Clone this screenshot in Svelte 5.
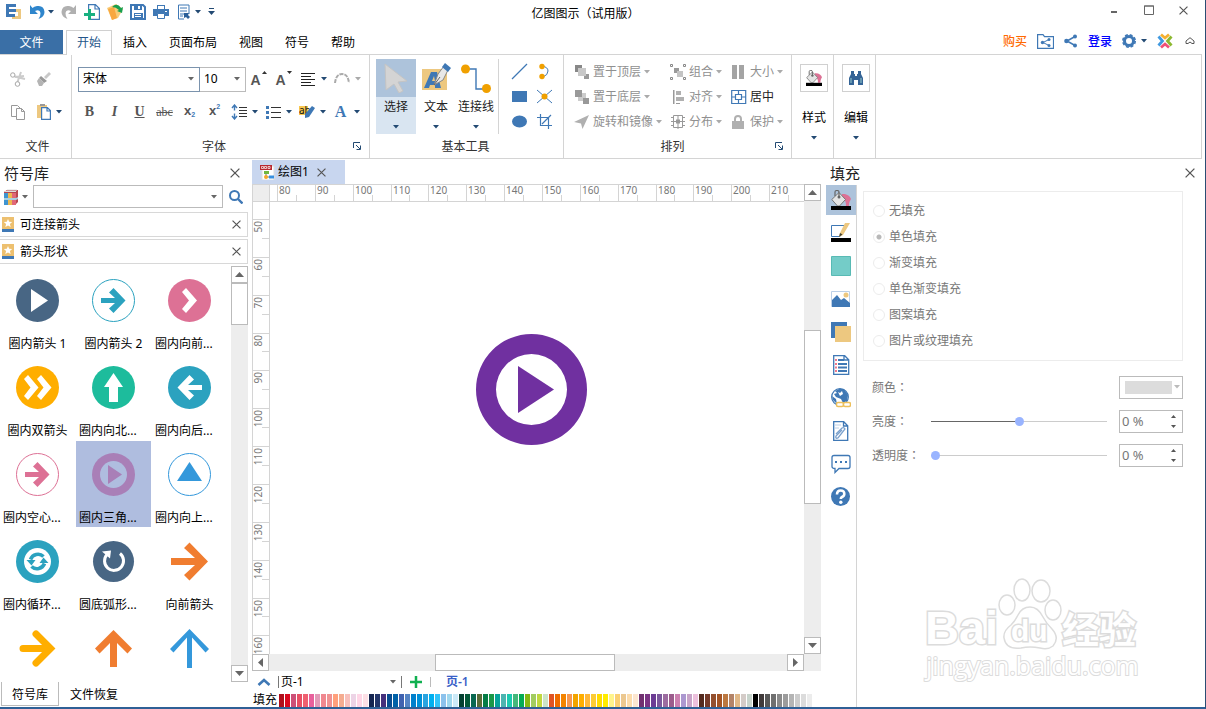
<script lang="ts">
	type Shape = { label: string; icon: string; color: string; cut?: boolean };

	const tabs = ["开始", "插入", "页面布局", "视图", "符号", "帮助"];

	const shapes: Shape[] = [
		{ label: "圈内箭头 1", icon: "play", color: "#486684" },
		{ label: "圈内箭头 2", icon: "ring-arrow", color: "#2ba2bf" },
		{ label: "圈内向前...", icon: "chevron", color: "#dd7195", cut: true },
		{ label: "圈内双箭头", icon: "double", color: "#ffae00" },
		{ label: "圈内向北...", icon: "north", color: "#1dbc9c", cut: true },
		{ label: "圈内向后...", icon: "back", color: "#2ba2bf", cut: true },
		{ label: "圈内空心...", icon: "ring-arrow", color: "#dd7195", cut: true },
		{ label: "圈内三角...", icon: "donut", color: "#a97fb7", cut: true },
		{ label: "圈内向上...", icon: "ring-up", color: "#3498db", cut: true },
		{ label: "圈内循环...", icon: "cycle", color: "#2ba2bf", cut: true },
		{ label: "圆底弧形...", icon: "redo", color: "#486684", cut: true },
		{ label: "向前箭头", icon: "right", color: "#f07d30" },
		{ label: "", icon: "round", color: "#ffae00" },
		{ label: "", icon: "up", color: "#f07d30" },
		{ label: "", icon: "thin-up", color: "#3498db" },
	];

	const arrange = [
		{ label: "置于顶层", icon: "front" },
		{ label: "组合", icon: "group" },
		{ label: "大小", icon: "size" },
		{ label: "置于底层", icon: "behind" },
		{ label: "对齐", icon: "align" },
		{ label: "居中", icon: "center", on: true },
		{ label: "旋转和镜像", icon: "rotate" },
		{ label: "分布", icon: "spread" },
		{ label: "保护", icon: "lock" },
	];

	const smallTools = [
		["line", "直线"], ["arc", "弧线"], ["rect", "矩形"],
		["cross", "连接点"], ["oval", "椭圆"], ["crop", "裁剪"],
	];

	const sideTools = [
		["bucket", "填充"], ["pen", "线条"], ["shadow", "阴影"], ["image", "图片"], ["layers", "图层"],
		["doc", "属性"], ["globe", "超链接"], ["clip", "附件"], ["chat", "注释"], ["help", "帮助"],
	];

	const fills = ["无填充", "单色填充", "渐变填充", "单色渐变填充", "图案填充", "图片或纹理填充"];

	const palette = (
		"b00f1b d9091f cd5078 e84f64 ef6070 e8609c e29ab8 f08890 f09292 ffa07c f5ac90 f8c0bc edd4e6 ffd6e6 fde0e6 " +
		"152550 24366a 45307c 084c90 0062a8 3f62b0 5584c4 0080cc 0090d8 2aa4e0 00b0f0 30c4fa 8cc2ec a0d8ee cceaf8 " +
		"044030 045838 0a6850 5a6c38 047c46 1a9848 06a49a 4cb4b0 1ccab0 44b87c 04ac54 84b814 a2cc60 c0d840 cce4c8 " +
		"e05424 ee6c00 f48400 f89850 f2a400 ffae00 ffb83a fccc34 ffdc00 ffec00 fff48c fad074 ecc890 fcdcac fce6d0 " +
		"703070 7a3484 6c3c94 7c589c 9c6ca0 9c5c8c cc80b0 ac98d0 c8a4c8 ecc0dc 542a1e 743a2a 94502e a45424 bc7840 " +
		"b48468 e0b888 d4ccc8 c8d4cc 000000 403a3a 585858 707070 8a8a8a 9c9c9c b4b4b4 cccccc dcdcdc ececec"
	).split(" ");

	// pixels per millimetre at the current zoom
	const scale = 3.785;

	function marks(first: number, count: number, offset: number) {
		return Array.from({ length: count }, (_, i) => ({
			value: first + i * 10,
			at: Math.round(offset + i * 10 * scale),
			half: Math.round(offset + (i * 10 + 5) * scale),
		}));
	}

	const across = marks(80, 14, 7);
	const down = marks(50, 12, 17);

	let activeTab = $state("开始");
	let activeShape = $state(7);
	let activeSide = $state("bucket");
	let fill = $state("单色填充");
	let sliders = $state([
		{ label: "亮度", value: 50 },
		{ label: "透明度", value: 0 },
	]);
</script>

{#snippet caret()}
	<svg class="caret" width="6" height="4" viewBox="0 0 6 4"><path d="M0 0h6L3 3.5z" fill="currentColor" /></svg>
{/snippet}

{#snippet cross(size)}
	<svg width={size} height={size} viewBox="0 0 10 10"><path d="M.6.6l8.800 8.800M9.400.6L.6 9.400" stroke="#555" stroke-width="1.300" /></svg>
{/snippet}

{#snippet bucket(size)}
	<svg width={size} height={size} viewBox="0 0 20 20">
		<path d="M11 4c5-.5 8 2 9 5-1 2-2 3-2 7h-3c0-3 0-6-4-8z" fill="#dd7195" />
		<path d="M.8 9.500L8 2.500l6.500 7-6 6.500h-2z" fill="#e4e4e4" stroke="#777" />
		<path d="M4 6V2q0-1.500 2-1.500T8 2v5" fill="none" stroke="#666" stroke-width="1.200" />
		<circle cx="8" cy="7" r="1.500" fill="#666" />
		<path d="M0 16h20v4H0z" />
	</svg>
{/snippet}

{#snippet scrollbar(vertical, before, size, after)}
	<div class="scrollbar" class:vertical>
		<button aria-label="后退">
			<svg width="9" height="9" viewBox="0 0 9 9"><path d={vertical ? "M0 7h9L4.500 2z" : "M7 0v9L2 4.500z"} fill="#666" /></svg>
		</button>
		<span style="flex: {before} 1 0"></span>
		<span class="thumb" style="flex: {size} 1 0"></span>
		<span style="flex: {after} 1 0"></span>
		<button aria-label="前进">
			<svg width="9" height="9" viewBox="0 0 9 9"><path d={vertical ? "M0 2h9L4.500 7z" : "M2 0v9l5-4.500z"} fill="#666" /></svg>
		</button>
	</div>
{/snippet}

{#snippet shapeArt(icon, color)}
	<svg width="43" height="43" viewBox="0 0 43 43" fill={color}>
		{#if icon.startsWith("ring")}
			<circle cx="21.500" cy="21.500" r="21" fill="#fff" stroke={color} />
		{:else if icon === "redo"}
			<circle cx="21.500" cy="21.500" r="20.500" />
		{:else if ["play", "chevron", "double", "north", "back", "cycle", "donut"].includes(icon)}
			<circle cx="21.500" cy="21.500" r="21.500" />
		{/if}

		{#if icon === "play"}
			<path d="M15 10v23l17-11.500z" fill="#fff" />
		{:else if icon === "ring-arrow"}
			<path d="M9 19h14l-6-5.500L21.500 9l12 12.500-12 12.500L17 29.500l6-5.500H9z" />
		{:else if icon === "chevron"}
			<path d="M14 13l4-4 11 12.500L18 34l-4-4 7-8.500z" fill="#fff" />
		{:else if icon === "double"}
			<path d="M8 13l4-4 10.500 12.500L12 34l-4-4 6.500-8.500zM21 13l4-4 10.500 12.500L25 34l-4-4 6.500-8.500z" fill="#fff" />
		{:else if icon === "north"}
			<path d="M21.500 7L31 21h-5v15h-9V21h-5z" fill="#fff" />
		{:else if icon === "back"}
			<path d="M34 19H20l6-5.500L21.500 9 9.500 21.500l12 12.500 4.500-4.500-6-5.500h14z" fill="#fff" />
		{:else if icon === "donut"}
			<circle cx="21.500" cy="21.500" r="13.500" fill="#afbddf" />
			<path d="M16 12v19l14-9.500z" />
		{:else if icon === "ring-up"}
			<path d="M21.500 9L34 28H9z" />
		{:else if icon === "cycle"}
			<circle cx="21.500" cy="21.500" r="13.500" fill="#fff" />
			<path d="M14.500 19.500a8 8 0 0 1 13-3M28.500 23.500a8 8 0 0 1-13 3" fill="none" stroke={color} stroke-width="3.600" />
			<path d="M10.500 20h9l-4 5.500zM32.500 23h-9l4-5.500z" />
		{:else if icon === "redo"}
			<path d="M28 13.500a9.500 9.500 0 1 1-13 1" fill="none" stroke="#fff" stroke-width="3" />
			<path d="M10 11.500l9-1-1 8z" fill="#fff" />
		{:else if icon === "right"}
			<path d="M3 18h24L16 8l5.500-5.500 18.500 19-18.500 19L16 35l11-10H3z" />
		{:else if icon === "round"}
			<path d="M7 21.500h27M20 7l14.500 14.500L20 36" fill="none" stroke={color} stroke-width="7" stroke-linecap="round" />
		{:else if icon === "up"}
			<path d="M18 40V16L7.500 26.500l-4.500-5L21.500 3 40 21.500l-4.500 5L25 16v24z" />
		{:else if icon === "thin-up"}
			<path d="M19 41V10.500L5.500 25.500 2 22 21.500 2 41 22l-3.500 3.500L24 10.500V41z" />
		{/if}
	</svg>
{/snippet}

{#snippet arrangeIcon(name)}
	<svg width="16" height="16" viewBox="0 0 16 16" fill="#b0b0b0">
		{#if name === "front"}
			<path d="M1 1h7v7H1z" fill="#888" /><path d="M10 10h5v5h-5zM8 6h-4v4h2V5h6z" fill="#999" /><path d="M4 4h8v8H4z" fill="#c8c8c8" />
		{:else if name === "behind"}
			<path d="M4 4h8v8H4z" fill="#ccc" /><path d="M1 1h7v7H1zM9 9h6v6H9z" fill="#999" />
		{:else if name === "rotate"}
			<path d="M0 8L15 1 8.500 15 7 9.500z" />
		{:else if name === "group"}
			<path d="M4 4h5v5H4z" fill="#999" /><path d="M7 7h6v6H7z" fill="#c4c4c4" />
			<path d="M.5.5h2v2h-2zM13.500.5h2v2h-2zM.5 13.500h2v2h-2zM13.500 13.500h2v2h-2z" fill="none" stroke="#888" />
		{:else if name === "align"}
			<path d="M3 1h1.500v14H3z" fill="#999" /><path d="M6 2h5v4H6zM6 8h8v4H6z" /><path d="M6 14h4v1H6z" fill="#999" />
		{:else if name === "spread"}
			<path d="M3.500 1.500h9v12h-9zM8 1v14M1 7.500h14M1 3.500h3M1 11.500h3M12 3.500h3M12 11.500h3" fill="none" stroke="#999" /><path d="M6 5.500h4v4H6z" fill="#999" />
		{:else if name === "size"}
			<path d="M1 1h5v14H1zM8 1h5v14H8z" fill="#a4a4a4" />
		{:else if name === "center"}
			<path d="M.7 1.500h14v13H.7zM4.500 5.500h6v5h-6zM7.500 1.500v4M7.500 10.500v4M.7 8h4M10.500 8h4" fill="none" stroke="#3f78b5" stroke-width="1.200" />
		{:else if name === "lock"}
			<path d="M1 7h12v8H1z" /><path d="M4 7V5q0-3 3-3t3 3v2" fill="none" stroke="#b0b0b0" stroke-width="2" />
		{/if}
	</svg>
{/snippet}

{#snippet toolIcon(name)}
	<svg width="17" height="17" viewBox="0 0 17 17" fill="#3f78b5">
		{#if name === "line"}
			<path d="M1 16L16 1" stroke="#3f78b5" stroke-width="1.200" />
		{:else if name === "rect"}
			<path d="M1 3h15v11H1z" />
		{:else if name === "oval"}
			<ellipse cx="8.500" cy="8.500" rx="7.500" ry="6" />
		{:else if name === "arc"}
			<path d="M6 3q6 1 6 5t-5 6" fill="none" stroke="#3f78b5" /><circle cx="6" cy="3.500" r="2.700" fill="#f0a000" /><circle cx="6" cy="13.500" r="2.700" fill="#f0a000" />
		{:else if name === "cross"}
			<path d="M1 2l15 13M16 2L1 15" stroke="#3f78b5" /><circle cx="8.500" cy="8.500" r="3" fill="#f0a000" />
		{:else if name === "crop"}
			<path d="M4.500 1v11.500H16M1 4.500h11.500V16M15 2l-9 9" fill="none" stroke="#3f78b5" stroke-width="1.200" />
		{/if}
	</svg>
{/snippet}

{#snippet sideIcon(name)}
	{#if name === "bucket"}
		{@render bucket(20)}
	{:else}
		<svg width="20" height="20" viewBox="0 0 20 20">
			{#if name === "pen"}
				<path d="M.5 2.500h14L9 13.500H.5z" fill="#fff" stroke="#3f78b5" /><path d="M0 15h20v4H0z" />
				<path d="M14 0h5l-7 12-4 2 1-4z" fill="#edc880" /><path d="M9 10l2.500 1.500L8 14z" fill="#443" />
			{:else if name === "shadow"}
				<path d="M.5.5h19v19H.5z" fill="#74ccc8" stroke="#58bab4" />
			{:else if name === "image"}
				<path d="M.5 2.500h18v15H.5z" fill="#fff" stroke="#bcd0e8" /><circle cx="15" cy="6" r="2.500" fill="#edc880" />
				<path d="M1 11l5-5 4 5 3-2 6 5v4H1z" fill="#3f78b5" />
			{:else if name === "layers"}
				<path d="M0 0h16v16H0z" fill="#3f78b5" /><path d="M4 4h16v16H4z" fill="#edc880" />
			{:else if name === "doc"}
				<path d="M2.700.7h11l4 4v14.600h-15zM13 1v4h4" fill="#fff" stroke="#3f78b5" stroke-width="1.300" />
				<path d="M7 5h6M7 9h9M7 12.500h9M7 16h9" stroke="#3f78b5" stroke-width="2" /><path d="M4 5h2M4 9h2M4 12.500h2M4 16h2" stroke="#f0788c" stroke-width="2" />
			{:else if name === "globe"}
				<circle cx="9" cy="9" r="8.300" fill="#fff" stroke="#3f78b5" stroke-width="1.300" />
				<path d="M4 3l4-2h5l4 6-1 6-4 2-2-4-5-2-2-3 3-1zM1 8l4 3 1 5-4-4z" fill="#3f78b5" /><path d="M7 4l2 1 2-2 1 3-3 2z" fill="#fff" />
				<rect x="5.500" y="14.500" width="7" height="4" rx="1.500" fill="#fff" stroke="#edc05c" stroke-width="1.500" /><rect x="12.500" y="14.500" width="7" height="4" rx="1.500" fill="#fff" stroke="#edc05c" stroke-width="1.500" />
			{:else if name === "clip"}
				<path d="M2.700.7h10l4 4v14.600h-14zM12.500 1v4h4" fill="#fff" stroke="#3f78b5" stroke-width="1.300" /><path d="M4 4h6M4 7h4" stroke="#bcd0e8" />
				<path d="M5 13l6-6q2-1 3 1l-7 9q-3 1-2-2l6-6" fill="none" stroke="#7aa0cc" stroke-width="1.300" />
			{:else if name === "chat"}
				<path d="M3 1.500h14q2 0 2 2v9q0 2-2 2H8l-4 4v-4q-3 0-3-2v-9q0-2 2-2z" fill="#fff" stroke="#3f78b5" stroke-width="1.300" />
				<path d="M4 7h2v2H4zM9 7h2v2H9zM14 7h2v2h-2z" fill="#3f78b5" />
			{:else if name === "help"}
				<circle cx="9.500" cy="9.500" r="9.500" fill="#3f78b5" /><path d="M6 7.500q0-4 3.700-4t3.600 3.500q0 2-2.300 3-1.200.6-1.200 2" fill="none" stroke="#fff" stroke-width="2.600" /><circle cx="9.800" cy="15.300" r="1.700" fill="#fff" />
			{/if}
		</svg>
	{/if}
{/snippet}

<div class="window">
	<header class="titlebar">
		<div class="quick">
			<svg width="16" height="16" viewBox="0 0 16 16">
				<path d="M9 5h6v10H6v-3h6V8H9z" fill="#edc880" /><path d="M0 0h10v3H3v2h7v3H3v2h6v3H0z" fill="#3f78b5" />
			</svg>
			<button class="drop" aria-label="撤销">
				<svg width="16" height="16" viewBox="0 0 16 16"><path d="M1 1v9h8L6 7q5-2 5.500 2 .2 3-2 6 6-2 6-7Q15 1 8 2 5 2.500 3.500 4z" fill="#2f86cc" /></svg>
				{@render caret()}
			</button>
			<button aria-label="重做">
				<svg width="16" height="16" viewBox="0 0 16 16"><path d="M15 1v9H7l3-3Q5 5 4.500 9q-.2 3 2 6-6-2-6-7Q1 1 8 2q3 .5 4.500 2z" fill="#b0b0b0" /></svg>
			</button>
			<button aria-label="新建">
				<svg width="16" height="16" viewBox="0 0 16 16"><path d="M4.600.6h6.800l4 4v10.800H4.600zM11 1v4h4" fill="#fff" stroke="#3f78b5" stroke-width="1.200" /><path d="M4 5h3v4h4v3H7v4H4v-4H0V9h4z" fill="#18b080" /></svg>
			</button>
			<button aria-label="打开">
				<svg width="16" height="16" viewBox="0 0 16 16"><path d="M0 4l9-4 7 5-5 9-6 2z" fill="#f8cc78" /><path d="M1 5l6-2 3 11-5 2z" fill="#f8a840" /><path d="M5 3q5-5 9 1l2-1-1 6-5-2 2-1Q9 3 5 3z" fill="#18a050" /></svg>
			</button>
			<button aria-label="保存">
				<svg width="16" height="16" viewBox="0 0 16 16"><path d="M1 1h12l2 2v12H1z" fill="#fff" stroke="#3f78b5" stroke-width="2" /><path d="M4 1h8v5H4zM4 9h9v6H4z" fill="#3f78b5" /><path d="M8 2h2v3H8zM5 10h6v1H5zM5 12h6v1H5z" fill="#fff" /></svg>
			</button>
			<button aria-label="打印">
				<svg width="16" height="16" viewBox="0 0 16 16" fill="#3f78b5"><path d="M4 1h8v4h4v7H0V5h4z" /><path d="M5 2h6v3H5zM4 10h8v4H4zM12 7h2v1h-2z" fill="#fff" /><path d="M4.500 9.500h7v5h-7z" fill="#fff" stroke="#3f78b5" /></svg>
			</button>
			<button class="drop" aria-label="预览">
				<svg width="16" height="16" viewBox="0 0 16 16"><path d="M2.500 1h10.500v9M2.500 1v14H8" fill="none" stroke="#3f78b5" /><path d="M4 4h7M4 7h7M4 10h4M4 12h3" stroke="#3f78b5" /><path d="M8 9h5l-1 2 2 2-2 2-2-2-2 1z" fill="#2b5f98" /></svg>
				{@render caret()}
			</button>
			<button aria-label="自定义">
				<svg width="7" height="8" viewBox="0 0 7 8" fill="#234a73"><path d="M1 0h5v1H1zM0 3h7L3.500 7z" /></svg>
			</button>
		</div>
		<h1>亿图图示（试用版）</h1>
		<div class="controls">
			<button aria-label="最小化"><svg width="10" height="10" viewBox="0 0 10 10"><path d="M2 6h6v2H2z" fill="#666" /></svg></button>
			<button aria-label="最大化"><svg width="10" height="10" viewBox="0 0 10 10"><path d="M.5 1h9v8.500h-9zM0 1h10" fill="none" stroke="#666" /></svg></button>
			<button aria-label="关闭">{@render cross(9)}</button>
		</div>
	</header>

	<nav class="tabbar">
		<button class="file">文件</button>
		{#each tabs as tab}
			<button class="tab" class:active={tab === activeTab} onclick={() => (activeTab = tab)}>{tab}</button>
		{/each}
		<div class="account">
			<a class="buy" href="#buy">购买</a>
			<button aria-label="共享文件夹">
				<svg width="17" height="15" viewBox="0 0 17 15"><path d="M.6 14.400V.6h5.400l1.500 2h9v11.800z" fill="none" stroke="#3f78b5" stroke-width="1.200" /><path d="M12 5.500L6 8.500l6 3" fill="none" stroke="#3f78b5" /><circle cx="12" cy="5.500" r="1.500" fill="#3f78b5" /><circle cx="5.500" cy="8.500" r="1.700" fill="#3f78b5" /><circle cx="12" cy="11.500" r="1.500" fill="#3f78b5" /></svg>
			</button>
			<button aria-label="分享">
				<svg width="14" height="14" viewBox="0 0 14 14" fill="#3f78b5"><path d="M11 2.500L3 7l8 4.500" fill="none" stroke="#3f78b5" stroke-width="1.500" /><circle cx="11" cy="2.500" r="2" /><circle cx="2.500" cy="7" r="2.300" /><circle cx="11" cy="11.500" r="2" /></svg>
			</button>
			<a class="login" href="#login">登录</a>
			<button class="drop" aria-label="设置">
				<svg width="14" height="14" viewBox="0 0 14 14"><circle cx="7" cy="7" r="4.500" fill="none" stroke="#3f78b5" stroke-width="3" /><circle cx="7" cy="7" r="6.200" fill="none" stroke="#3f78b5" stroke-width="1.600" stroke-dasharray="2.900 1.970" /></svg>
				{@render caret()}
			</button>
			<button aria-label="社区">
				<svg width="16" height="16" viewBox="0 0 16 16" stroke-width="2.800" fill="none"><path d="M4 1.500l4 3.500 4-3.500" stroke="#f5b030" /><path d="M1.500 3.500L5.500 8l-4 4.500" stroke="#4099e0" /><path d="M14.500 3.500L10.500 8l4 4.500" stroke="#8cb830" /><path d="M4 14.500L8 11l4 3.500" stroke="#f05078" /></svg>
			</button>
			<button aria-label="收起功能区">
				<svg width="10" height="8" viewBox="0 0 10 8"><path d="M1 4l4-3.300L9 4v2.500H7L5 5 3 6.500H1z" fill="#fff" stroke="#555" /></svg>
			</button>
		</div>
	</nav>

	<section class="ribbon">
		<div class="group files">
			<div class="line">
				<button aria-label="剪切">
					<svg width="16" height="16" viewBox="0 0 16 16" fill="none" stroke="#a8a8a8"><path d="M4.500 5.500L15 8M7.500 11L11 1M5 6l9-1" stroke="#ccc" stroke-width="2" /><circle cx="2.800" cy="4" r="2.200" /><circle cx="7.500" cy="13" r="2.300" /></svg>
				</button>
				<button aria-label="格式刷">
					<svg width="16" height="16" viewBox="0 0 16 16"><path d="M8 6l5-5 2 2-5 5z" fill="#c8c8c8" /><path d="M5 5l6 5-3 2-5-5z" fill="#999" /><path d="M3 7l5 5-2 3H3l-2-5z" fill="#b4b4b4" /></svg>
				</button>
			</div>
			<div class="line">
				<button aria-label="复制">
					<svg width="16" height="16" viewBox="0 0 16 16" fill="#fff" stroke="#999"><path d="M1.500 1.500h6l3 3v8h-9z" /><path d="M6.500 4.500h5l3 3v8h-8zM11.500 4.500v3h3" /></svg>
				</button>
				<button class="drop" aria-label="粘贴">
					<svg width="16" height="16" viewBox="0 0 16 16"><path d="M1 1h10v13H1z" fill="#edc880" /><path d="M4 0h5v2H4z" fill="#999" /><path d="M5.600 3.600h5.800l3 3v8.800H5.600zM11 4v3h3" fill="#fff" stroke="#3f78b5" stroke-width="1.200" /></svg>
					{@render caret()}
				</button>
			</div>
			<h2>文件</h2>
		</div>

		<div class="group fonts">
			<div class="line">
				<label class="combo family">
					<select aria-label="字体"><option>宋体</option></select>{@render caret()}
				</label>
				<label class="combo size">
					<select aria-label="字号"><option>10</option></select>{@render caret()}
				</label>
				<button class="letter" aria-label="增大字号">A<svg width="5" height="3" viewBox="0 0 5 3"><path d="M0 3h5L2.500 0z" fill="#333" /></svg></button>
				<button class="letter" aria-label="减小字号">A<svg width="5" height="3" viewBox="0 0 5 3"><path d="M0 0h5L2.500 3z" fill="#333" /></svg></button>
				<button class="drop wide" aria-label="对齐方式">
					<svg width="16" height="16" viewBox="0 0 16 16"><path d="M1 2.500h14M1 5.500h10M1 8.500h14M1 11.500h10M1 14.500h14" stroke="#222" /></svg>
					{@render caret()}
				</button>
				<button class="drop wide faded" aria-label="弧形文字">
					<svg width="16" height="16" viewBox="0 0 16 16"><path d="M1 12Q2 3 8 3t7 9" fill="none" stroke="#aaa" stroke-width="2" stroke-dasharray="4 1" /></svg>
					{@render caret()}
				</button>
			</div>
			<div class="line formats">
				<button class="serif bold">B</button>
				<button class="serif italic">I</button>
				<button class="serif under">U</button>
				<button class="serif strike">abc</button>
				<button class="script">x<sub>2</sub></button>
				<button class="script">x<sup>2</sup></button>
				<button class="drop wide" aria-label="行距">
					<svg width="16" height="16" viewBox="0 0 16 16"><path d="M3.500 1.500v5M3.500 9.500v5M1 4l2.500-3L6 4M1 12l2.500 3L6 12" fill="none" stroke="#3f78b5" stroke-width="1.400" /><path d="M8 3.500h8M8 6.500h8M8 9.500h8M8 12.500h8" stroke="#333" /></svg>
					{@render caret()}
				</button>
				<button class="drop wide" aria-label="项目符号">
					<svg width="16" height="16" viewBox="0 0 16 16"><path d="M1 2h3v3H1zM1 7h3v3H1zM1 12h3v3H1z" fill="#3f78b5" /><path d="M6 3.500h10M6 8.500h10M6 13.500h10" stroke="#333" /></svg>
					{@render caret()}
				</button>
				<button class="drop wide" aria-label="突出显示">
					<svg width="16" height="16" viewBox="0 0 16 16"><path d="M0 2h9v9H0z" fill="#f8c850" /><text x="0" y="10" font-size="10" fill="#111">ab</text><path d="M13 2l3 2-6 9-4 1V10z" fill="#3f78b5" /></svg>
					{@render caret()}
				</button>
				<button class="drop wide color" aria-label="字体颜色"><b>A</b>{@render caret()}</button>
			</div>
			<h2>字体</h2>
			<button class="launcher" aria-label="字体设置"><svg width="8" height="8" viewBox="0 0 8 8"><path d="M.5 6V.5H7M3 3l4 4M7.500 3.500v4h-4" fill="none" stroke="#234a73" /></svg></button>
		</div>

		<div class="group basic">
			<div class="tools">
				<button class="big chosen">
					<span class="art"><svg width="24" height="30" viewBox="0 0 24 30"><path d="M1 1l22 17-9 1 5 9-4 2-5-9-8 6z" fill="#d4d4d4" stroke="#c4c4c4" /></svg></span>
					选择{@render caret()}
				</button>
				<button class="big">
					<span class="art"><svg width="30" height="30" viewBox="0 0 30 30"><path d="M1 6h25v21H1z" fill="#edc880" /><path d="M10 9h6l4 16h-6v-3H9l-1 3H3zM13 13l-2 5h3z" fill="#3f78b5" /><path d="M23 3l4 4-5 10-9 5 4-11z" fill="#e8e8e8" stroke="#888" /><path d="M24 0l6 5-3 4-6-5z" fill="#3f78b5" /><path d="M13 22l6-8" stroke="#666" /></svg></span>
					文本{@render caret()}
				</button>
				<button class="big">
					<span class="art"><svg width="30" height="30" viewBox="0 0 30 30"><path d="M5 6h10v20h12" fill="none" stroke="#3f78b5" stroke-width="1.400" /><circle cx="4.500" cy="6" r="4.500" fill="#f0a000" /><circle cx="25.500" cy="25.500" r="4.500" fill="#f0a000" /></svg></span>
					连接线{@render caret()}
				</button>
				<div class="small">
					{#each smallTools as [icon, name]}
						<button aria-label={name}>{@render toolIcon(icon)}</button>
					{/each}
				</div>
			</div>
			<h2>基本工具</h2>
		</div>

		<div class="group arrange">
			<div class="commands">
				{#each arrange as item}
					<button class:on={item.on}>
						{@render arrangeIcon(item.icon)}{item.label}
						{#if !item.on}{@render caret()}{/if}
					</button>
				{/each}
			</div>
			<h2>排列</h2>
			<button class="launcher" aria-label="排列设置"><svg width="8" height="8" viewBox="0 0 8 8"><path d="M.5 6V.5H7M3 3l4 4M7.500 3.500v4h-4" fill="none" stroke="#234a73" /></svg></button>
		</div>

		<button class="group folded"><span class="frame">{@render bucket(16)}</span>样式{@render caret()}</button>
		<button class="group folded">
			<span class="frame"><svg width="16" height="16" viewBox="0 0 16 16" fill="#356496"><path d="M3 1h3v3h1v2h2V4h1V1h3v3l2 4v7h-5v-5H6v5H1V8l2-4z" /><path d="M3 8v5M13 8v5" stroke="#9cc" /></svg></span>
			编辑{@render caret()}
		</button>
	</section>

	<main>
		<aside class="library">
			<div class="heading"><h3>符号库</h3><button aria-label="关闭符号库">{@render cross(10)}</button></div>
			<div class="search">
				<button class="drop" aria-label="符号库">
					<svg width="15" height="16" viewBox="0 0 15 16"><path d="M0 3l3-2h11v12l-2 2H0z" fill="#b84850" /><path d="M0 4h4v12H0z" fill="#3f94d0" /><path d="M4 4h4v12H4z" fill="#edb850" /><path d="M8 4h4v12H8z" fill="#e06878" /><path d="M1 2.500h11M3 1h10" stroke="#ddd" /><path d="M0 9h12l2-1v2l-2 1H0z" fill="#a8d0e0" /></svg>
					{@render caret()}
				</button>
				<label class="combo"><input type="text" aria-label="搜索符号" />{@render caret()}</label>
				<button aria-label="搜索"><svg width="14" height="14" viewBox="0 0 14 14" fill="none" stroke="#3f78b5"><circle cx="5.500" cy="5.500" r="4.500" stroke-width="2" /><path d="M9 9l4.500 4.500" stroke-width="2.400" /></svg></button>
			</div>
			{#each ["可连接箭头", "箭头形状"] as name}
				<div class="category">
					<svg width="12" height="15" viewBox="0 0 12 15"><path d="M0 0h12v12H0z" fill="#edc070" /><path d="M0 12h12v3H0z" fill="#3f78b5" /><path d="M6 2l1.200 2.800 3 .2-2.300 2 .8 3L6 8.400 3.300 10l.8-3-2.300-2 3-.2z" fill="#fff" /></svg>
					<span>{name}</span>
					<button aria-label="关闭{name}">{@render cross(9)}</button>
				</div>
			{/each}
			<div class="browser">
				<div class="shapes">
					{#each shapes as shape, i}
						<button class="shape" class:active={i === activeShape} onclick={() => (activeShape = i)}>
							{@render shapeArt(shape.icon, shape.color)}
							{#if shape.label}<span class:cut={shape.cut}>{shape.label}</span>{/if}
						</button>
					{/each}
				</div>
				{@render scrollbar(true, 0, 40, 342)}
			</div>
			<div class="panel-tabs">
				<button class="active">符号库</button>
				<button>文件恢复</button>
			</div>
		</aside>

		<section class="workspace">
			<div class="documents">
				<div class="document">
					<svg width="15" height="15" viewBox="0 0 15 15"><path d="M2 1h12v14H2z" fill="#fff" stroke="#ddd" /><path d="M0 0h12v5H0z" fill="#b82830" /><path d="M1.500 1.500h2v2h-2zM4.500 1.500h2v2h-2zM8 1.500h2v2H8z" fill="none" stroke="#fff" stroke-width=".7" /><path d="M4 6h5v3H4z" fill="#70b840" /><path d="M6 9v3h4" fill="none" stroke="#777" /><circle cx="6" cy="12" r="2" fill="#f5a828" /><path d="M9 10.500h5v3H9z" fill="#3890e0" /></svg>
					绘图1
					<button aria-label="关闭绘图1">{@render cross(9)}</button>
				</div>
			</div>
			<div class="board">
				<div class="corner"></div>
				<svg class="ruler top">
					{#each across as mark}
						<path d="M{mark.at + 0.5} 0v17M{mark.half + 0.5} 10v7" />
						<text x={mark.at + 2} y="9">{mark.value}</text>
					{/each}
				</svg>
				<div class="bar-y">{@render scrollbar(true, 130, 172, 134)}</div>
				<svg class="ruler left">
					{#each down as mark}
						<path d="M0 {mark.at + 0.5}h17M9 {mark.half + 0.5}h8" />
						<text text-anchor="end" transform="translate(9 {mark.at + 2}) rotate(-90)">{mark.value}</text>
					{/each}
				</svg>
				<div class="canvas">
					<svg class="figure" width="111" height="111" viewBox="0 0 111 111" fill="#7030a0">
						<path d="M55.500 0a55.500 55.500 0 1 1 0 111 55.500 55.500 0 1 1 0-111zm0 20a35.500 35.500 0 1 0 0 71 35.500 35.500 0 1 0 0-71z" /><path d="M42 32v47l36-23.500z" />
					</svg>
				</div>
				<div class="bar-x">{@render scrollbar(false, 166, 179, 172)}</div>
				<div class="rest"></div>
			</div>
			<div class="pages">
				<button aria-label="展开"><svg width="14" height="8" viewBox="0 0 14 8"><path d="M1.500 7L7 2l5.500 5" fill="none" stroke="#3f78b5" stroke-width="2.600" /></svg></button>
				<label class="combo"><select aria-label="页面"><option>页-1</option></select>{@render caret()}</label>
				<button aria-label="添加页面"><svg width="12" height="12" viewBox="0 0 12 12"><path d="M6 0v12M0 6h12" stroke="#10b050" stroke-width="2.500" /></svg></button>
				<i></i>
				<button class="page">页-1</button>
			</div>
			<div class="palette">
				<span>填充</span>
				{#each palette as color}
					<button aria-label="#{color}" style="background: #{color}"></button>
				{/each}
			</div>
		</section>

		<aside class="format">
			<div class="heading"><h3>填充</h3><button aria-label="关闭填充">{@render cross(10)}</button></div>
			<div class="content">
				<div class="side">
					{#each sideTools as [icon, name]}
						<button class:active={icon === activeSide} aria-label={name} onclick={() => (activeSide = icon)}>{@render sideIcon(icon)}</button>
					{/each}
				</div>
				<div class="settings">
					<fieldset disabled>
						{#each fills as name}
							<label><input type="radio" name="fill" value={name} bind:group={fill} />{name}</label>
						{/each}
					</fieldset>
					<div class="setting">
						<span>颜色<span class="colon">：</span></span>
						<button class="field swatch" disabled aria-label="颜色"><i></i>{@render caret()}</button>
					</div>
					{#each sliders as slider}
						<div class="setting">
							<span>{slider.label}<span class="colon">：</span></span>
							<input type="range" disabled aria-label={slider.label} bind:value={slider.value} style="--value: {slider.value}%" />
							<div class="field">
								<input type="text" disabled aria-label={slider.label} value="0 %" />
								<div class="steps">
									<button disabled aria-label="增加"><svg width="5" height="3" viewBox="0 0 5 3"><path d="M0 3h5L2.500 0z" fill="#555" /></svg></button>
									<button disabled aria-label="减少"><svg width="5" height="3" viewBox="0 0 5 3"><path d="M0 0h5L2.500 3z" fill="#555" /></svg></button>
								</div>
							</div>
						</div>
					{/each}
				</div>
			</div>
			<svg class="mark" width="220" height="110" viewBox="0 0 220 110" fill="#fff" stroke="#dcdcdc" stroke-width="1.500">
				<text x="2" y="67" font-size="47" font-weight="bold">Bai</text>
				<ellipse cx="84" cy="28" rx="8" ry="10" /><ellipse cx="99" cy="13" rx="8" ry="11" /><ellipse cx="118" cy="14" rx="9" ry="11" /><ellipse cx="130" cy="33" rx="8" ry="10" />
				<path d="M107 30q8 0 13 10 3 6 9 12 8 9 1 17-5 4-13 2-10-2-19 0-15 2-17-10-1-7 7-13 4-4 7-10 4-8 12-8z" />
				<text x="88" y="64" font-size="30" font-weight="bold">du</text>
				<text class="cjk" x="139" y="67" font-size="37" font-weight="bold">经验</text>
				<text class="address" x="3" y="98" font-size="25">jingyan.baidu.com</text>
			</svg>
		</aside>
	</main>
</div>

<style>
	:global(body) {
		margin: 0;
	}

	.window {
		box-sizing: border-box;
		height: 100vh;
		display: flex;
		flex-direction: column;
		overflow: hidden;
		border-right: 1px solid #2b4d73;
		border-bottom: 2px solid #2f6096;
		background: #fff;
		color: #000;
		font: 12px/16px "Noto Sans", "Noto Sans CJK SC", sans-serif;
	}

	.window * {
		box-sizing: border-box;
	}

	button,
	select,
	input {
		margin: 0;
		padding: 0;
		border: 0;
		border-radius: 0;
		background: none;
		color: inherit;
		font: inherit;
		outline: none;
	}

	button {
		display: flex;
		align-items: center;
		justify-content: center;
		white-space: nowrap;
	}

	svg {
		display: block;
		flex-shrink: 0;
	}

	h1,
	h2,
	h3 {
		margin: 0;
		font-size: 12px;
		font-weight: 400;
	}

	.caret {
		color: #234a73;
	}

	.drop {
		gap: 3px;
	}

	/* title bar */

	.titlebar {
		display: grid;
		grid-template-columns: 1fr auto 1fr;
		align-items: center;
		height: 28px;
		flex-shrink: 0;
	}

	.quick {
		display: flex;
		align-items: center;
		gap: 7px;
		height: 24px;
		padding-left: 6px;
		align-self: start;
	}

	.titlebar h1 {
		padding-right: 34px;
	}

	.controls {
		display: flex;
		justify-content: flex-end;
		height: 20px;
		padding-right: 4px;
		align-self: start;
	}

	.controls button {
		width: 35px;
	}

	/* tabs */

	.tabbar {
		display: flex;
		align-items: flex-end;
		height: 26px;
		flex-shrink: 0;
	}

	.file {
		width: 63px;
		height: 24px;
		margin-right: 3px;
		padding-top: 2px;
		background: #3a6fa6;
		color: #fff;
	}

	.tab {
		height: 24px;
		padding: 2px 11px 0;
	}

	.tab.active {
		height: 25px;
		margin-bottom: -1px;
		padding: 0 10px;
		z-index: 1;
		background: #fff;
		border: 1px solid #d0d0d0;
		border-bottom: 0;
		color: #24568a;
	}

	.account {
		display: flex;
		align-items: center;
		gap: 10px;
		height: 26px;
		margin-left: auto;
		padding-right: 10px;
	}

	.account a {
		padding-top: 2px;
		font-weight: 500;
		text-decoration: none;
	}

	.account .drop {
		gap: 5px;
	}

	.account button:last-child {
		margin-left: 2px;
	}

	.buy {
		color: #ff6a00;
	}

	.login {
		color: #00f;
	}

	/* ribbon */

	.ribbon {
		display: flex;
		height: 105px;
		flex-shrink: 0;
		margin-right: 3px;
		border: 1px solid #d4d4d4;
		border-left: 0;
	}

	.group {
		position: relative;
		display: flex;
		flex-direction: column;
		border-right: 1px solid #d4d4d4;
		padding-bottom: 3px;
	}

	.group h2 {
		margin-top: auto;
		text-align: center;
		color: #333;
	}

	.line {
		display: flex;
		align-items: center;
		height: 24px;
	}

	.files {
		width: 72px;
		gap: 9px;
		padding-top: 12px;
	}

	.files h2 {
		padding-left: 4px;
	}

	.files .line {
		gap: 10px;
		padding-left: 10px;
	}

	.files .drop {
		gap: 4px;
	}

	.fonts {
		width: 298px;
		gap: 9px;
		padding-top: 12px;
		padding-left: 5px;
	}

	.fonts h2 {
		padding-right: 18px;
	}

	.fonts .line:first-child {
		padding-left: 1px;
	}

	.combo {
		position: relative;
		display: flex;
		align-items: center;
		border: 1px solid #bbb;
	}

	.combo select,
	.combo input {
		appearance: none;
		width: 100%;
		height: 100%;
		padding-left: 4px;
	}

	.combo .caret {
		position: absolute;
		right: 5px;
		color: #666;
		pointer-events: none;
	}

	.family {
		width: 122px;
		height: 25px;
		border-color: #7b93ad;
	}

	.size {
		width: 46px;
		height: 25px;
		border-left: 0;
	}

	.letter {
		width: 25px;
		height: 24px;
		gap: 1px;
		align-items: flex-start;
		padding-top: 4px;
		color: #555;
		font: bold 14px/18px "Liberation Sans", sans-serif;
	}

	.wide {
		width: 34px;
		height: 24px;
		gap: 5px;
	}

	.faded .caret {
		color: #aaa;
	}

	.formats button:not(.wide) {
		width: 25px;
		height: 24px;
		color: #555;
	}

	.formats .serif {
		font: bold 14px/16px "Liberation Serif", serif;
	}

	.formats .italic {
		font-style: italic;
	}

	.under {
		text-decoration: underline;
	}

	.formats .strike {
		font-size: 12px;
		font-weight: 400;
		text-decoration: line-through;
	}

	.formats .script {
		padding-bottom: 2px;
		font: bold 13px/16px "Liberation Sans", sans-serif;
	}

	.script sub,
	.script sup {
		height: 16px;
		color: #3f78b5;
		font-size: 7px;
		vertical-align: baseline;
	}

	.script sub {
		line-height: 24px;
	}

	.script sup {
		line-height: 8px;
	}

	.color b {
		width: 16px;
		color: #3f78b5;
		font: bold 16px/16px "Liberation Serif", serif;
	}

	.launcher {
		position: absolute;
		right: 8px;
		bottom: 8px;
	}

	.basic {
		width: 194px;
		padding-top: 4px;
		padding-left: 6px;
	}

	.tools {
		display: flex;
	}

	.big {
		flex-direction: column;
		justify-content: flex-start;
		width: 40px;
		height: 75px;
		color: #222;
	}

	.art {
		display: flex;
		align-items: center;
		justify-content: center;
		width: 100%;
		height: 38px;
		margin-bottom: 2px;
	}

	.big .caret {
		margin-top: 10px;
	}

	.chosen {
		background: #d9e5f1;
	}

	.chosen .art {
		background: #adc3db;
	}

	.small {
		display: grid;
		grid-template-columns: 25px 25px;
		grid-auto-rows: 25px;
		margin-left: 2px;
		padding-left: 8px;
		border-left: 1px solid #d4d4d4;
	}

	.arrange {
		width: 228px;
		padding-top: 4px;
		padding-left: 10px;
	}

	.basic h2,
	.arrange h2 {
		padding-right: 8px;
	}

	.arrange h2 {
		padding-right: 20px;
	}

	.commands {
		display: grid;
		grid-template-columns: 96px 61px 55px;
		grid-auto-rows: 25px;
	}

	.commands button {
		justify-content: flex-start;
		gap: 3px;
		color: #909090;
	}

	.commands .caret {
		color: #aaa;
	}

	.commands .on {
		color: #222;
	}

	.folded {
		width: 42px;
		justify-content: flex-start;
		padding-top: 9px;
		padding-left: 3px;
		padding-bottom: 0;
	}

	.frame {
		display: flex;
		align-items: center;
		justify-content: center;
		width: 28px;
		height: 28px;
		margin-bottom: 18px;
		border: 1px solid #d0d0d0;
	}

	.folded .caret {
		margin-top: 10px;
	}

	/* docked panels */

	main {
		display: grid;
		grid-template-columns: 248px minmax(0, 1fr) 380px;
		column-gap: 4px;
		flex: 1;
		min-height: 0;
	}

	.library {
		display: flex;
		flex-direction: column;
		min-height: 0;
	}

	.heading {
		display: flex;
		align-items: center;
		justify-content: space-between;
		height: 26px;
		padding: 2px 8px 0 4px;
		flex-shrink: 0;
	}

	.heading h3 {
		font-size: 15px;
		line-height: 20px;
		color: #222;
	}

	.search {
		display: flex;
		align-items: center;
		height: 23px;
		margin-bottom: 4px;
		padding: 0 5px 0 4px;
		flex-shrink: 0;
	}

	.search .combo {
		flex: 1;
		height: 23px;
		margin: 0 6px 0 5px;
	}

	.search .caret {
		color: #666;
	}

	.category {
		display: flex;
		align-items: center;
		height: 25px;
		margin-bottom: 2px;
		padding: 0 6px 0 2px;
		border: 1px solid #d8d8d8;
		border-left: 0;
		flex-shrink: 0;
	}

	.category span {
		flex: 1;
		padding-left: 6px;
	}

	.browser {
		display: flex;
		flex: 1;
		min-height: 0;
	}

	.shapes {
		flex: 1;
		display: grid;
		grid-template-columns: repeat(3, 76px);
		grid-auto-rows: 87px;
		padding-top: 1px;
		overflow: hidden;
	}

	.shape {
		flex-direction: column;
		justify-content: flex-start;
		gap: 14px;
		margin: 0 1px 1px 0;
		padding-top: 12px;
	}

	.shape.active {
		background: #afbddf;
	}

	.shape .cut {
		align-self: flex-start;
		padding-left: 3px;
	}

	.scrollbar {
		display: flex;
		height: 17px;
		width: 100%;
		background: #ededed;
	}

	.scrollbar.vertical {
		flex-direction: column;
		width: 17px;
		height: 100%;
	}

	.scrollbar button {
		width: 17px;
		height: 17px;
		flex-shrink: 0;
		background: #fff;
		border: 1px solid #bbb;
	}

	.thumb {
		background: #fff;
		border: 1px solid #bbb;
	}

	.panel-tabs {
		display: flex;
		height: 25px;
		padding: 0 0 1px 1px;
		flex-shrink: 0;
	}

	.panel-tabs button {
		padding: 2px 11px 0;
	}

	.panel-tabs .active {
		padding: 2px 10px 0;
		border: 1px solid #bbb;
		border-top: 0;
	}

	/* workspace */

	.workspace {
		display: flex;
		flex-direction: column;
		min-width: 0;
		min-height: 0;
	}

	.documents {
		display: flex;
		padding-top: 1px;
		flex-shrink: 0;
	}

	.document {
		display: flex;
		align-items: center;
		gap: 3px;
		width: 93px;
		height: 24px;
		padding-left: 8px;
		background: #c8d6ef;
	}

	.document button {
		margin-left: 5px;
	}

	.board {
		display: grid;
		grid-template-columns: 18px minmax(0, 1fr) 17px;
		grid-template-rows: 18px minmax(0, 1fr) 17px;
		flex: 1;
		min-height: 0;
	}

	.corner {
		background: #ededed;
		border: 1px solid #d4d4d4;
	}

	.ruler {
		width: 100%;
		height: 100%;
		overflow: hidden;
		stroke: #d4d4d4;
		fill: none;
	}

	.ruler text {
		stroke: none;
		fill: #777;
		font-size: 10px;
	}

	.top {
		border-top: 1px solid #d4d4d4;
		border-bottom: 1px solid #d4d4d4;
	}

	.left {
		border-left: 1px solid #d4d4d4;
		border-right: 1px solid #d4d4d4;
	}

	.bar-y {
		grid-column: 3;
		grid-row: 1 / 3;
	}

	.canvas {
		position: relative;
		overflow: hidden;
	}

	.figure {
		position: absolute;
		left: 206px;
		top: 132px;
	}

	.bar-x {
		grid-column: 1 / 3;
	}

	.rest {
		background: #ededed;
	}

	.pages {
		display: flex;
		align-items: center;
		height: 22px;
		padding-left: 5px;
		flex-shrink: 0;
	}

	.pages .combo {
		width: 124px;
		height: 12px;
		margin: 0 8px 0 7px;
		border: solid #777;
		border-width: 0 1px;
	}

	.pages select {
		height: 16px;
		padding-left: 2px;
	}

	.pages i {
		width: 1px;
		height: 10px;
		margin: 0 15px 0 8px;
		background: #bbb;
	}

	.page {
		color: #3a60c8;
		font-weight: 600;
	}

	.palette {
		display: flex;
		align-items: center;
		gap: 1px;
		height: 14px;
		padding-left: 1px;
		flex-shrink: 0;
		overflow: hidden;
	}

	.palette span {
		margin-right: 1px;
		flex-shrink: 0;
	}

	.palette button {
		width: 5px;
		height: 13px;
		flex-shrink: 0;
	}

	/* fill panel */

	.format {
		position: relative;
		display: flex;
		flex-direction: column;
		min-height: 0;
		color: #777;
	}

	.format .heading {
		padding-left: 5px;
		padding-right: 10px;
	}

	.content {
		display: flex;
		flex: 1;
		min-height: 0;
	}

	.side {
		display: flex;
		flex-direction: column;
		gap: 3px;
		width: 32px;
		padding-left: 1px;
		border-right: 1px solid #d4d4d4;
	}

	.side button {
		height: 30px;
		flex-shrink: 0;
	}

	.side .active {
		background: #adc3db;
	}

	.settings {
		flex: 1;
		padding: 6px 22px 0 6px;
	}

	fieldset {
		margin: 0 0 9px;
		padding: 6px 9px;
		border: 1px solid #ececec;
	}

	fieldset label {
		display: flex;
		align-items: center;
		gap: 4px;
		height: 26px;
	}

	input[type="radio"] {
		appearance: none;
		width: 12px;
		height: 12px;
		border: 1px solid #ececec;
		border-radius: 50%;
	}

	input[type="radio"]:checked {
		background: radial-gradient(circle, #b8b8b8 2px, #fff 3px);
	}

	.setting {
		display: flex;
		align-items: center;
		height: 34px;
		padding-left: 9px;
	}

	.setting > span {
		width: 59px;
		padding-top: 2px;
	}

	.colon {
		font-family: "Noto Sans CJK TC", sans-serif;
		line-height: 1;
	}

	.field {
		display: flex;
		align-items: center;
		width: 64px;
		height: 23px;
		margin-left: auto;
		padding: 0 6px 0 2px;
		border: 1px solid #bbb;
		font-size: 13px;
	}

	.field input {
		min-width: 0;
		flex: 1;
	}

	.swatch {
		justify-content: space-between;
		padding: 0 2px 0 5px;
	}

	.swatch i {
		width: 47px;
		height: 13px;
		background: #dcdcdc;
	}

	.swatch .caret {
		color: #bbb;
	}

	.steps {
		display: flex;
		flex-direction: column;
		gap: 7px;
	}

	input[type="range"] {
		appearance: none;
		flex: 1;
		min-width: 0;
		height: 9px;
		margin-right: 12px;
		background: linear-gradient(90deg, #666 var(--value), #ccc var(--value)) center / 100% 1px no-repeat;
	}

	input[type="range"]::-webkit-slider-thumb {
		appearance: none;
		width: 9px;
		height: 9px;
		border-radius: 50%;
		background: #99b4ff;
	}

	.mark {
		position: absolute;
		right: 62px;
		bottom: 20px;
		font-family: "Liberation Sans", sans-serif;
		pointer-events: none;
	}

	.mark text {
		stroke-width: 3px;
		paint-order: stroke;
	}

	.mark .cjk {
		font-family: "Noto Sans CJK SC", sans-serif;
	}

	.mark .address {
		font-family: "Open Sans", sans-serif;
		stroke-width: 2px;
	}
</style>
